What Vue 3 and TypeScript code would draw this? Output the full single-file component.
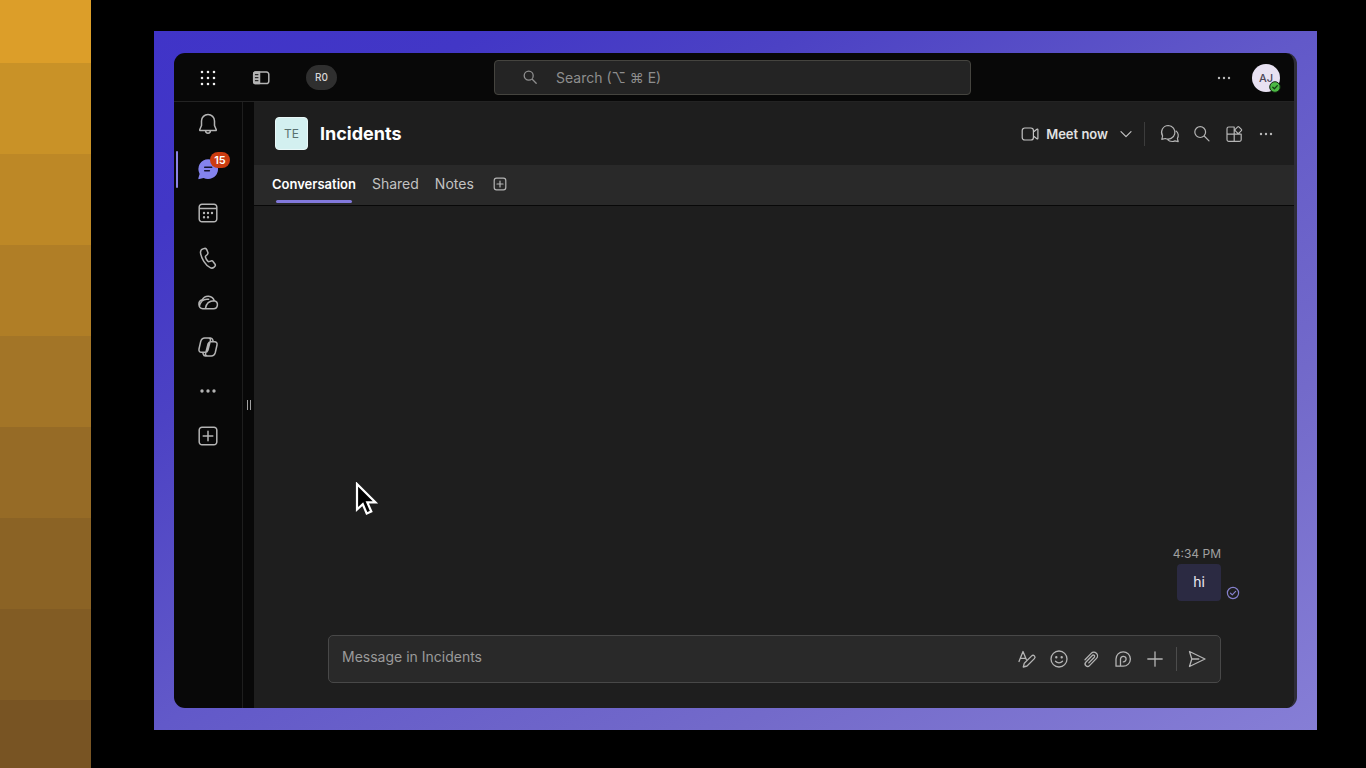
<script setup lang="ts">
import { ref } from 'vue'

interface Glyph {
  label: string
  d: string
  dots?: string
}

const swatches: string[] = [
  '#dc9e29', '#c99227', '#bd8826', '#b07e26', '#a37527', '#966b26', '#8b6325', '#825c24', '#785423',
]

const railItems: Glyph[] = [
  { label: 'Activity', d: 'M12 2.5a6.5 6.5 0 0 0-6.5 6.5v4.5l-1.8 4.2q-.2.8.6.8h15.4q.8 0 .6-.8l-1.8-4.2V9A6.5 6.5 0 0 0 12 2.5zM9.6 18.8a2.4 2.4 0 0 0 4.8 0' },
  { label: 'Chat', d: '' },
  { label: 'Calendar', d: 'M6 3.2h12a2.8 2.8 0 0 1 2.8 2.8v12a2.8 2.8 0 0 1-2.8 2.8H6A2.8 2.8 0 0 1 3.2 18V6A2.8 2.8 0 0 1 6 3.2zM3.2 7.6h17.6', dots: 'M8 12h0M12 12h0M16 12h0M8 16.2h0M12 16.2h0' },
  { label: 'Calls', d: 'M7 2.9l1.4-.4c1-.3 1.9.2 2.3 1.1l1.1 2.6c.3.8.1 1.7-.5 2.3L9.7 10c-.3.3-.4.6-.3 1 .4 1.600 1.400 3.200 2.600 4.400.3.3.6.3 1 .2l2-.6c.8-.3 1.700 0 2.200.7l1.700 2.300c.6.8.5 1.800-.2 2.500l-.6.6c-1.100 1-2.600 1.300-3.900.6C9.400 19.300 5.200 12.300 4.500 6.600 4.400 5 5.400 3.400 7 2.900z' },
  { label: 'OneDrive', d: 'M6.900 18.700h10.600a4 4 0 0 0 .8-7.900A6.500 6.500 0 0 0 6.300 9.700 4.600 4.600 0 0 0 6.900 18.700zM3.400 16.200c.9-3.900 3.800-7.800 9.200-6.900M9.400 18.500c.7-4.500 4-7.700 8.900-7.700' },
  { label: 'Copilot', d: 'M8.800 3h3.700c1.500 0 2.300 1.200 1.900 2.600l-2.500 9.600c-.4 1.400-1.300 2.100-2.800 2.100H5.500c-2 0-2.900-1.500-2.500-3.300l1.700-7.500C5.300 4.300 6.600 3 8.800 3zM15.200 21h-3.700c-1.500 0-2.300-1.200-1.900-2.600l2.500-9.600c.4-1.400 1.300-2.100 2.800-2.100h3.600c2 0 2.900 1.500 2.500 3.300l-1.700 7.500c-.6 2.200-1.900 3.500-4.100 3.500zM12.500 3h2c1.400 0 2 .8 2.300 2l.4 1.700M11.500 21h-2c-1.400 0-2-.8-2.300-2l-.4-1.700' },
  { label: 'More apps', d: '', dots: 'M6 12h0M12 12h0M18 12h0' },
  { label: 'Apps', d: 'M6 3.2h12a2.8 2.8 0 0 1 2.8 2.8v12a2.8 2.8 0 0 1-2.8 2.8H6A2.8 2.8 0 0 1 3.2 18V6A2.8 2.8 0 0 1 6 3.2zM12 7.2v9.6M7.2 12h9.6' },
]

const headerActions: Glyph[] = [
  { label: 'Open chat', d: 'M10.300 3.500a6.800 6.800 0 1 1-3 13l-3.500.8.8-3.400A6.800 6.800 0 0 1 10.300 3.500zM9.300 17.400c1.200 1.300 3 2.100 4.900 2.100 1 0 1.900-.2 2.700-.6l3.300.7-.8-3.200c.8-1.200 1-2.500.8-3.900-.2-1.300-.9-2.500-1.900-3.400' },
  { label: 'Find in channel', d: 'M10.2 4.700a5.400 5.400 0 1 1 0 10.800 5.400 5.400 0 0 1 0-10.800zM14.200 14l4.800 4.800' },
  { label: 'Add an app', d: 'M12.200 5H6.800A1.800 1.800 0 0 0 5 6.800v10.800a1.800 1.800 0 0 0 1.800 1.800h10.600a1.800 1.800 0 0 0 1.800-1.800v-5.400H5M12.200 5v14.400M15.700 4.900q.6-.6 1.200 0l2.500 2.500q.6.6 0 1.200l-2.500 2.500q-.6.6-1.200 0l-2.500-2.500q-.6-.6 0-1.200z' },
  { label: 'More options', d: '', dots: 'M7 12h0M12 12h0M17 12h0' },
]

const composeActions: Glyph[] = [
  { label: 'Format', d: 'M4 14.500L8 4.500l3.300 8M5.300 11.300h4.700M9.300 16.200l7.400-7.300a1.900 1.900 0 0 1 2.700 2.700L12 19l-3.700 1z' },
  { label: 'Emoji', d: 'M12 4a8 8 0 1 1 0 16 8 8 0 0 1 0-16zM8.500 14.300c1.900 2.100 5.100 2.100 7 0', dots: 'M9.300 10.300h0M14.700 10.300h0' },
  { label: 'Attach', d: 'M6 12.800l6.200-6.400a3.600 3.600 0 0 1 5.300 5l-7 7.200a2.500 2.500 0 0 1-3.700-3.400l6.500-6.700a1.300 1.300 0 0 1 2 1.700l-5.500 5.700' },
  { label: 'Loop component', d: 'M5 19.200V12a7.200 7.200 0 1 1 7.200 7.200zM9.500 19v-6.800a2.800 2.800 0 1 1 2.800 2.700' },
  { label: 'Actions and apps', d: 'M12 4.800v14.400M4.800 12h14.400' },
]

const tabs = ['Conversation', 'Shared', 'Notes']
const activeTab = ref('Conversation')
const query = ref('')
const draft = ref('')
</script>

<template>
  <div class="page">
    <div class="swatches" aria-hidden="true">
      <div v-for="c in swatches" :key="c" class="swatch" :style="{ background: c }"></div>
    </div>

    <div class="stage">
      <div class="frame">
        <div class="window">
          <header class="topbar">
            <div class="top-left">
              <button class="icon-btn bright" type="button" aria-label="App launcher">
                <svg viewBox="0 0 24 24"><path class="grid-dots" d="M6 6h0M12 6h0M18 6h0M6 12h0M12 12h0M18 12h0M6 18h0M12 18h0M18 18h0" /></svg>
              </button>
              <button class="icon-btn" type="button" aria-label="Toggle panel">
                <svg viewBox="0 0 24 24">
                  <path d="M7 6h10.500a2.300 2.300 0 0 1 2.300 2.300v7a2.300 2.300 0 0 1-2.300 2.300H7a2.300 2.300 0 0 1-2.300-2.300v-7A2.300 2.300 0 0 1 7 6z" />
                  <path class="solid" d="M6.500 6h4v11.600h-4a1.800 1.800 0 0 1-1.800-1.800V7.800A1.800 1.800 0 0 1 6.500 6z" />
                  <path class="ink" d="M6.300 8.700h2.700M6.300 11.700h2.700M6.300 14.700h2.700" />
                </svg>
              </button>
              <button class="pill" type="button">R0</button>
            </div>
            <label class="search">
              <svg class="glyph" viewBox="0 0 24 24" aria-hidden="true"><path d="M10.700 6.200a4.500 4.500 0 1 1 0 9 4.500 4.500 0 0 1 0-9zM14 14l4.200 4.200" /></svg>
              <input v-model="query" type="text" aria-label="Search" placeholder="Search (⌥ ⌘ E)" />
            </label>
            <div class="top-right">
              <button class="icon-btn" type="button" aria-label="Settings and more">
                <svg viewBox="0 0 24 24"><path class="dots" d="M7 12h0M12 12h0M17 12h0" /></svg>
              </button>
              <button class="avatar" type="button" aria-label="Account AJ">
                AJ
                <svg class="presence" viewBox="0 0 12 12"><circle cx="6" cy="6" r="5.300" /><path d="M3.800 6.200l1.600 1.500 2.900-3.100" /></svg>
              </button>
            </div>
          </header>

          <div class="body">
            <nav class="rail" aria-label="Apps">
              <div v-for="item in railItems" :key="item.label" class="rail-item" :class="{ selected: item.label === 'Chat' }">
                <button class="icon-btn" type="button" :aria-label="item.label">
                  <svg v-if="item.label === 'Chat'" viewBox="0 0 24 24">
                    <path class="chat-fill" d="M12.200 2.200a9.900 9.900 0 1 1-4.600 18.700l-4.300 1.200q-1.200.2-.9-1l1.200-4.200A9.900 9.900 0 0 1 12.200 2.200z" />
                    <path class="chat-lines" d="M8.700 10.300h7M8.700 13.800h4.700" />
                  </svg>
                  <svg v-else viewBox="0 0 24 24">
                    <path v-if="item.d" :d="item.d" />
                    <path v-if="item.dots" class="dots" :d="item.dots" />
                  </svg>
                </button>
                <span v-if="item.label === 'Chat'" class="badge">15</span>
              </div>
            </nav>

            <div class="gutter"><span class="grip"></span></div>

            <main class="main">
              <div class="channel-head">
                <span class="team">TE</span>
                <h1>Incidents</h1>
                <button class="meet" type="button">
                  <svg class="glyph thin" viewBox="0 0 24 24"><path d="M6.800 6h6a2.600 2.600 0 0 1 2.600 2.600v6.800a2.600 2.600 0 0 1-2.600 2.600h-6a2.600 2.600 0 0 1-2.600-2.600V8.600A2.600 2.600 0 0 1 6.800 6zM15.400 10l3.500-2.700q1-.6 1 .5v8.400q0 1.100-1 .5L15.400 14" /></svg>
                  <span>Meet now</span>
                  <svg class="glyph thin chevron" viewBox="0 0 24 24"><path d="M7 9.700l5 5 5-5" /></svg>
                </button>
                <div class="head-actions">
                  <button v-for="a in headerActions" :key="a.label" class="icon-btn thin" type="button" :aria-label="a.label">
                    <svg viewBox="0 0 24 24">
                      <path v-if="a.d" :d="a.d" />
                      <path v-if="a.dots" class="dots" :d="a.dots" />
                    </svg>
                  </button>
                </div>
              </div>

              <div class="tabs">
                <button v-for="t in tabs" :key="t" class="tab" :class="{ active: t === activeTab }" type="button" @click="activeTab = t">{{ t }}</button>
                <button class="icon-btn add-tab" type="button" aria-label="Add a tab">
                  <svg viewBox="0 0 24 24"><path d="M8.500 6.200h7a2.300 2.300 0 0 1 2.300 2.300v7a2.300 2.300 0 0 1-2.300 2.300h-7a2.300 2.300 0 0 1-2.300-2.300v-7a2.300 2.300 0 0 1 2.300-2.300zM12 9v6M9 12h6" /></svg>
                </button>
              </div>

              <section class="thread">
                <time>4:34 PM</time>
                <div class="message">
                  <p class="bubble">hi</p>
                  <svg class="receipt" viewBox="0 0 14 14" aria-label="Sent"><circle cx="7" cy="7" r="5.600" /><path d="M4.500 7.200l1.800 1.700 3.300-3.500" /></svg>
                </div>
              </section>

              <div class="composer">
                <input v-model="draft" type="text" aria-label="Message in Incidents" placeholder="Message in Incidents" />
                <div class="compose-actions">
                  <button v-for="a in composeActions" :key="a.label" class="icon-btn" type="button" :aria-label="a.label">
                    <svg viewBox="0 0 24 24">
                      <path :d="a.d" />
                      <path v-if="a.dots" class="dots" :d="a.dots" />
                    </svg>
                  </button>
                </div>
                <button class="icon-btn send" type="button" aria-label="Send">
                  <svg viewBox="0 0 24 24"><path d="M4.500 4.500l15.500 7.500-15.500 7.500 2.300-7.500zM6.800 12h7" /></svg>
                </button>
              </div>

              <svg class="pointer" viewBox="0 0 24 34" aria-hidden="true">
                <path d="M2 2v25.500l5.800-5.300 3.900 9.300 4.600-2-4-9.100h8.200z" />
              </svg>
            </main>
          </div>
        </div>
      </div>
    </div>
  </div>
</template>

<style>
body {
  background: #000;
}
</style>

<style scoped>
* {
  box-sizing: border-box;
}
.page {
  display: flex;
  height: 100vh;
  background: #000;
  color: #fff;
  font-family: Inter, "Liberation Sans", "DejaVu Sans", sans-serif;
  font-size: 14px;
  line-height: 20px;
}
button,
input {
  font: inherit;
  color: inherit;
  background: none;
  border: 0;
  padding: 0;
  margin: 0;
}
input {
  outline: none;
  min-width: 0;
}
svg {
  display: block;
  fill: none;
  stroke: currentColor;
  stroke-width: 1.5;
  stroke-linecap: round;
  stroke-linejoin: round;
}
.swatches {
  display: flex;
  flex-direction: column;
  flex: 0 0 91px;
}
.swatch {
  flex: 0 0 91px;
}
.swatch:first-child {
  flex-basis: 63px;
}
.swatch:last-child {
  flex: 1 1 0;
}
.stage {
  display: flex;
  flex: 1;
  min-width: 0;
  padding: 31px 49px 38px 63px;
}
.frame {
  display: flex;
  flex: 1;
  min-width: 0;
  padding: 22px 20px;
  background: linear-gradient(to bottom right, #4034c8 0%, #4237c6 14%, #4c42c4 28%, #6259c9 50%, #736aca 75%, #867ed6 100%);
}
.window {
  display: flex;
  flex-direction: column;
  flex: 1;
  min-width: 0;
  overflow: hidden;
  border-radius: 11px;
  border-right: 3px solid #2e2d38;
  background: #080808;
}
.topbar {
  display: grid;
  grid-template-columns: 320px 1fr 323px;
  align-items: center;
  flex: 0 0 49px;
  border-bottom: 1px solid #232323;
}
.top-left,
.top-right {
  display: flex;
  align-items: center;
  padding-top: 1px;
}
.top-left {
  padding-left: 22px;
}
.top-left .icon-btn + .icon-btn {
  margin-left: 29px;
}
.icon-btn {
  display: block;
  flex: none;
  width: 24px;
  height: 24px;
  color: #b4b4b4;
}
.icon-btn svg {
  width: 24px;
  height: 24px;
}
.bright {
  color: #f0f0f0;
}
.thin svg,
.glyph.thin {
  stroke-width: 1.2;
}
.solid {
  fill: currentColor;
}
.ink {
  stroke: #0a0a0a;
  stroke-width: 1;
}
.dots {
  stroke-width: 2.4;
}
.rail-item:nth-child(7) .dots {
  stroke-width: 3.4;
}
.grid-dots {
  stroke-width: 2.6;
}
.glyph {
  flex: none;
  width: 24px;
  height: 24px;
}
.pill {
  width: 31px;
  height: 25px;
  margin-left: 33px;
  border-radius: 13px;
  background: #2f2f2f;
  color: #d6d6d6;
  font-size: 10px;
  line-height: 25px;
  font-weight: 500;
}
.search {
  display: flex;
  align-items: center;
  gap: 14px;
  height: 35px;
  padding-left: 23px;
  border: 1px solid #45443f;
  border-radius: 4px;
  background: #242424;
  color: #8e8e8e;
}
.search .glyph {
  stroke-width: 1.3;
}
.search input {
  flex: 1;
  padding-top: 2px;
}
input::placeholder {
  color: #8e8e8e;
  opacity: 1;
}
.top-right {
  justify-content: flex-end;
  gap: 16px;
  padding-right: 14px;
}
.avatar {
  position: relative;
  width: 28px;
  height: 28px;
  border-radius: 50%;
  background: #e8e1f2;
  color: #4c4658;
  font-size: 11px;
  font-weight: 500;
  line-height: 28px;
}
.presence {
  position: absolute;
  right: -1px;
  bottom: -1px;
  width: 12px;
  height: 12px;
}
.presence circle {
  fill: #4cb944;
  stroke: #10240f;
  stroke-width: 1;
}
.presence path {
  stroke: #123f10;
  stroke-width: 1.3;
}
.body {
  display: flex;
  flex: 1;
  min-height: 0;
}
.rail {
  display: flex;
  flex-direction: column;
  justify-content: space-between;
  flex: 0 0 68px;
  height: 356px;
}
.rail-item {
  position: relative;
  display: flex;
  align-items: center;
  justify-content: center;
  height: 44px;
}
.rail-item.selected::before {
  content: "";
  position: absolute;
  left: 2px;
  top: 4px;
  width: 2px;
  height: 37px;
  border-radius: 1px;
  background: #8c84e6;
}
.chat-fill {
  fill: #8483ee;
  stroke: none;
}
.chat-lines {
  stroke: #14132e;
  stroke-width: 1.5;
}
.badge {
  position: absolute;
  left: 36px;
  top: 5px;
  width: 20px;
  height: 16px;
  border-radius: 8px;
  background: #cb3c10;
  font-size: 11px;
  line-height: 16px;
  font-weight: 600;
  text-align: center;
}
.gutter {
  display: flex;
  align-items: center;
  justify-content: center;
  flex: 0 0 12px;
  border-left: 1px solid #1e1e1e;
}
.grip {
  width: 4px;
  height: 10px;
  border: solid #a0a0a0;
  border-width: 0 1px;
}
.main {
  position: relative;
  display: flex;
  flex-direction: column;
  flex: 1;
  min-width: 0;
  background: #1e1e1e;
}
.channel-head {
  display: flex;
  align-items: center;
  flex: 0 0 63px;
  padding: 0 16px 0 21px;
}
.team {
  width: 33px;
  height: 33px;
  border: 1px solid #e9f8f8;
  border-radius: 4px;
  background: #d3f0f0;
  color: #58706f;
  font-size: 12px;
  line-height: 31px;
  text-align: center;
}
h1 {
  margin: 0 auto 0 12px;
  font-size: 18px;
  line-height: 24px;
  font-weight: 700;
}
.meet {
  display: flex;
  align-items: center;
  gap: 4px;
  color: #c4c4c4;
  font-size: 13px;
  font-weight: 600;
}
.meet span {
  color: #e2e2e2;
}
.chevron {
  margin-left: 2px;
}
.head-actions {
  display: flex;
  align-items: center;
  gap: 8px;
  height: 24px;
  margin-left: 6px;
  padding-left: 13px;
  border-left: 1px solid #3c3c3c;
}
.tabs {
  display: flex;
  align-items: stretch;
  gap: 16px;
  flex: 0 0 41px;
  padding-left: 18px;
  border-bottom: 1px solid #080808;
  background: #292929;
}
.tab {
  position: relative;
  padding-bottom: 2px;
  color: #c2c2c2;
}
.tab.active {
  color: #fff;
  font-size: 13px;
  font-weight: 600;
}
.tab.active::after {
  content: "";
  position: absolute;
  left: 4px;
  right: 4px;
  bottom: 2px;
  height: 3px;
  border-radius: 2px;
  background: #8279dc;
}
.add-tab {
  align-self: center;
  margin: 0 0 2px -2px;
}
.add-tab svg {
  stroke-width: 1.2;
}
.thread {
  display: flex;
  flex-direction: column;
  justify-content: flex-end;
  align-items: flex-end;
  flex: 1;
  min-height: 0;
  padding: 0 73px 34px;
}
time {
  color: #a0a0a0;
  font-size: 12px;
  line-height: 20px;
}
.message {
  display: flex;
  align-items: flex-end;
  gap: 5px;
  margin-right: -19px;
}
.bubble {
  width: 44px;
  margin: 0;
  padding: 8px 0 9px;
  border-radius: 4px;
  background: #2b2a42;
  color: #ebebf2;
  text-align: center;
}
.receipt {
  width: 14px;
  height: 14px;
  margin-bottom: 1px;
  color: #8580cc;
  stroke-width: 1.2;
}
.composer {
  display: flex;
  align-items: center;
  flex: 0 0 48px;
  margin: 0 73px 25px 74px;
  padding: 0 11px 0 13px;
  border: 1px solid #484848;
  border-radius: 5px;
  background: #292929;
}
.composer input {
  flex: 1;
  padding-bottom: 4px;
}
.composer input::placeholder {
  color: #9a9a9a;
}
.compose-actions {
  display: flex;
  gap: 8px;
  padding-right: 9px;
}
.compose-actions svg,
.send svg {
  stroke-width: 1.3;
}
.send {
  width: 33px;
  padding-left: 8px;
  border-left: 1px solid #4c4c4c;
}
.pointer {
  position: absolute;
  left: 101px;
  top: 380px;
  width: 24px;
  height: 34px;
}
.pointer path {
  fill: #000;
  stroke: #fff;
  stroke-width: 2.200;
  stroke-linejoin: miter;
}
</style>
